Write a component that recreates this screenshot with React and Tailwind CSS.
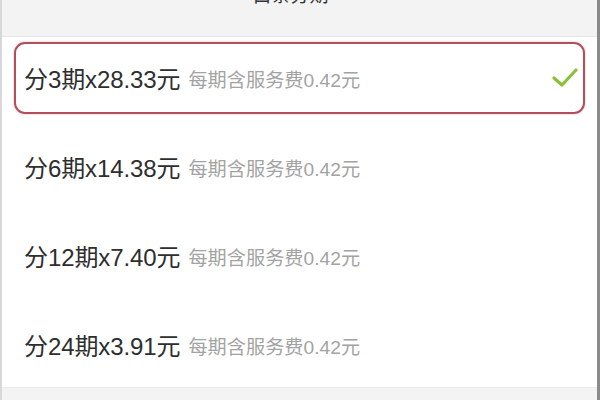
import React from "react";

const rows = [
  { main: "分3期x28.33元", selected: true },
  { main: "分6期x14.38元" },
  { main: "分12期x7.40元" },
  { main: "分24期x3.91元" },
];

export default function App() {
  return (
    <div
      className="w-[600px] h-[400px] overflow-hidden bg-white flex flex-col border-l-2 border-l-[#d8d8d8] border-r-[3px] border-r-[#8a8a8a]"
      style={{ fontFamily: '"Liberation Sans", "Noto Sans CJK SC", sans-serif' }}
    >
      <div className="h-[37px] shrink-0 bg-[#f3f3f3] border-b border-[#e6e6e6] flex justify-center pr-[18px]">
        <div className="-mt-[16px] text-[19px] leading-[24px] text-[#333]">白条分期</div>
      </div>
      <div className="flex flex-col px-[12px] pt-[5px] pb-[6px]">
        {rows.map((r, i) => (
          <div
            key={i}
            className={
              "h-[72px] mb-[17px] last:mb-0 flex items-center pt-[4px] pl-[8px] pr-[5px] rounded-[11px] " +
              (r.selected
                ? "border-2 border-[#b0505c] shadow-[0_0_2px_rgba(176,80,92,0.5)]"
                : "border-2 border-transparent")
            }
          >
            <span className="text-[24px] text-[#2e2e2e] tracking-[-0.1px]">{r.main}</span>
            <span className="ml-[8px] text-[19.2px] text-[#a3a3a3] mt-[2px]">每期含服务费0.42元</span>
            {r.selected && (
              <svg className="ml-auto -mt-[4px]" width="26" height="22" viewBox="0 0 26 22">
                <path d="M2 11 L10 18 L24 3" fill="none" stroke="#8cbf3a" strokeWidth="3.2" strokeLinecap="round" strokeLinejoin="round" />
              </svg>
            )}
          </div>
        ))}
      </div>
      <div className="flex-1 bg-[#f3f3f3] border-t border-[#ececec]" />
    </div>
  );
}
